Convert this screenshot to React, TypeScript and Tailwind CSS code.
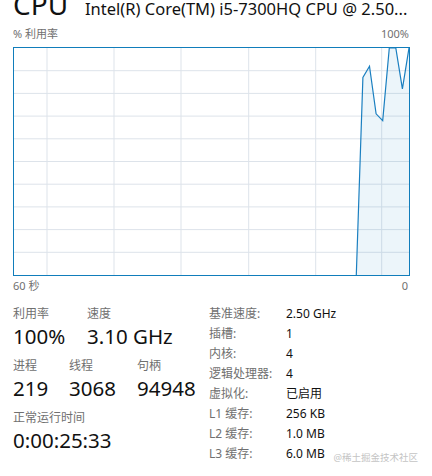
import React from 'react';

const W = 395;
const H = 227;

// recent samples, newest last (0..100)
const samples = [0, 87, 92, 71, 68, 100, 100, 82, 100];

const Chart = () => {
  const step = W / 60;
  const pts = samples.map((v, i) => {
    const k = samples.length - 1 - i;
    return [W - k * step, H - (v / 100) * H] as const;
  });
  const line = pts.map(([x, y]) => `${x.toFixed(1)},${y.toFixed(1)}`).join(' ');
  const area = `${pts[0][0].toFixed(1)},${H} ${line} ${W},${H}`;
  const vLines = [33, 100, 167, 234.7, 301.7, 367.7];
  const hLines = Array.from({ length: 9 }, (_, i) => (i + 1) * (H / 10));

  return (
    <div className="w-[395px] h-[227px] border border-[#117dbb] box-content">
      <svg width={W} height={H} className="block">
        {hLines.map((y) => (
          <line key={'h' + y} x1={0} x2={W} y1={y} y2={y} stroke="#dde3ea" strokeWidth={1} />
        ))}
        {vLines.map((x) => (
          <line key={'v' + x} x1={x} x2={x} y1={0} y2={H} stroke="#dde3ea" strokeWidth={1} />
        ))}
        <polygon points={area} fill="rgba(17,125,187,0.08)" />
        <polyline points={line} fill="none" stroke="#1a7fc0" strokeWidth={1.2} />
      </svg>
    </div>
  );
};

const Stat = ({ label, value, className = '' }: { label: string; value: string; className?: string }) => (
  <div className={'flex flex-col ' + className}>
    <div className="h-[20px] leading-[20px] text-[12px] text-[#707070]">{label}</div>
    <div className="h-[24px] leading-[24px] text-[20.5px] text-[#111]">{value}</div>
  </div>
);

const details: [string, string][] = [
  ['基准速度:', '2.50 GHz'],
  ['插槽:', '1'],
  ['内核:', '4'],
  ['逻辑处理器:', '4'],
  ['虚拟化:', '已启用'],
  ['L1 缓存:', '256 KB'],
  ['L2 缓存:', '1.0 MB'],
  ['L3 缓存:', '6.0 MB'],
];

const App: React.FC = () => {
  return (
    <div
      className="w-[432px] h-[476px] overflow-hidden bg-white relative"
      style={{ fontFamily: '"Noto Sans", "Noto Sans CJK SC", sans-serif' }}
    >
      <div className="px-[13px] flex flex-col">
        {/* header */}
        <div className="h-[24px] flex items-start">
          <div className="flex items-baseline mt-[-15px] h-[38px]">
            <span className="text-[28px] leading-[38px] text-[#111] w-[72px]">CPU</span>
            <span className="text-[16.5px] text-[#111] whitespace-nowrap">Intel(R) Core(TM) i5-7300HQ CPU @ 2.50...</span>
          </div>
        </div>
        <div className="flex justify-between w-[396px] h-[23px] items-center text-[11px] text-[#707070] pb-[3px]">
          <span>% 利用率</span>
          <span>100%</span>
        </div>
        <Chart />
        <div className="flex justify-between w-[395px] h-[20px] items-center text-[11px] text-[#707070]">
          <span>60 秒</span>
          <span>0</span>
        </div>

        {/* stats */}
        <div className="flex mt-[8px]">
          <div className="w-[196px] flex flex-col">
            <div className="flex">
              <Stat label="利用率" value="100%" className="w-[74px]" />
              <Stat label="速度" value="3.10 GHz" />
            </div>
            <div className="flex mt-[8px]">
              <Stat label="进程" value="219" className="w-[56px]" />
              <Stat label="线程" value="3068" className="w-[68px]" />
              <Stat label="句柄" value="94948" />
            </div>
            <div className="flex mt-[8px]">
              <Stat label="正常运行时间" value="0:00:25:33" />
            </div>
          </div>
          <div className="flex flex-col text-[12px]">
            {details.map(([k, v]) => (
              <div key={k} className="flex h-[20px] items-center">
                <span className="w-[77px] text-[#707070]">{k}</span>
                <span className="text-[#111]">{v}</span>
              </div>
            ))}
          </div>
        </div>
      </div>
      <div className="absolute right-[14px] bottom-[12px] text-[9.5px] leading-[12px] text-[#c4c4c4]">@稀土掘金技术社区</div>
    </div>
  );
};

export default App;
